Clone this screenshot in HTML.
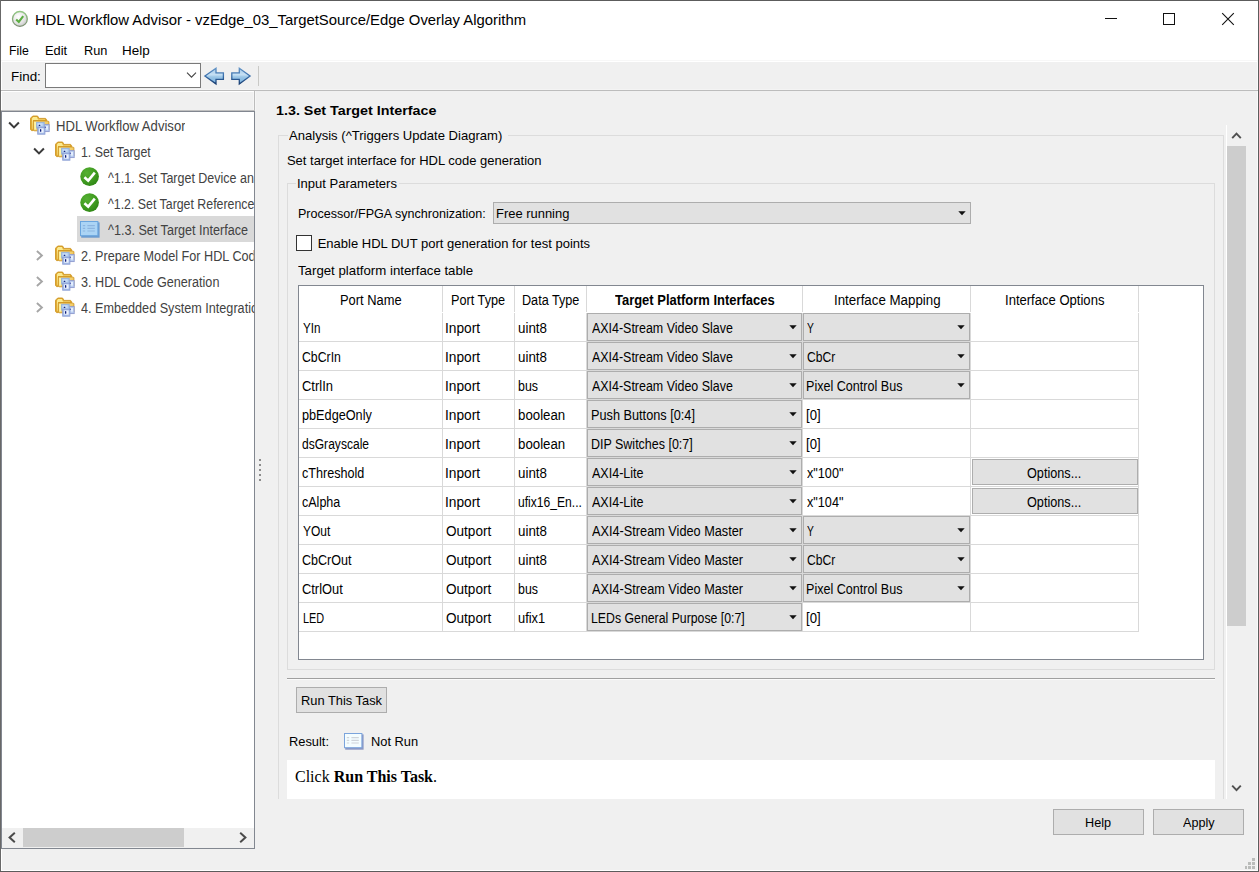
<!DOCTYPE html><html><head><meta charset="utf-8"><title>HDL Workflow Advisor</title><style>
html,body{margin:0;padding:0;}body{width:1259px;height:872px;position:relative;overflow:hidden;background:#f0f0f0;font-family:"Liberation Sans", sans-serif;}
.a{position:absolute;}.t{position:absolute;white-space:nowrap;line-height:normal;transform-origin:0 0;font-family:"Liberation Sans", sans-serif;}
.serif{font-family:"Liberation Serif",serif;}
</style></head><body>
<div class="a" style="left:0px;top:0px;width:1259px;height:872px;background:#f0f0f0;"></div>
<div class="a" style="left:0px;top:0px;width:1259px;height:62px;background:#fff;"></div>
<div class="a" style="left:0px;top:60px;width:1259px;height:1px;background:#f7f7f7;"></div>
<div class="a" style="left:0px;top:89px;width:1259px;height:1px;background:#f4f4f4;"></div>
<div class="a" style="left:2px;top:91px;width:252px;height:1px;background:#fff;"></div>
<svg class="a" style="left:11px;top:10px" width="18" height="18" viewBox="0 0 18 18">
<defs><radialGradient id="tg" cx="0.4" cy="0.35" r="0.75"><stop offset="0" stop-color="#ffffff"/><stop offset="0.6" stop-color="#e4e4e4"/><stop offset="1" stop-color="#bdbdbd"/></radialGradient>
<linearGradient id="tgb" x1="0" y1="0" x2="0" y2="1"><stop offset="0" stop-color="#93c884"/><stop offset="1" stop-color="#7c8f72"/></linearGradient></defs>
<circle cx="8.9" cy="8.9" r="7.4" fill="url(#tg)" stroke="url(#tgb)" stroke-width="1.3"/>
<path d="M5.2 9.6 L7.8 12 L12.2 6.2" fill="none" stroke="#5cae42" stroke-width="2.1" stroke-linecap="butt" stroke-linejoin="miter"/>
</svg>
<div class="a" style="left:1105px;top:18px;width:12px;height:1px;background:#111;"></div>
<div class="a" style="left:1163px;top:13px;width:12px;height:12px;border:1px solid #111;box-sizing:border-box;"></div>
<svg class="a" style="left:1221px;top:12px" width="14" height="14" viewBox="0 0 14 14"><path d="M1.2 1.2 L12.8 12.8 M12.8 1.2 L1.2 12.8" stroke="#111" stroke-width="1.1" fill="none"/></svg>
<div class="a" style="left:45px;top:63px;width:156px;height:25px;background:#fff;border:1px solid #7a7a7a;box-sizing:border-box;"></div>
<svg class="a" style="left:186px;top:71px" width="11" height="8" viewBox="0 0 11 8"><path d="M1 1.7 L5.5 6.2 L10 1.7" stroke="#444" stroke-width="1.1" fill="none"/></svg>
<svg class="a" style="left:203px;top:66px" width="50" height="20" viewBox="0 0 50 20">
<defs><linearGradient id="ag" x1="0" y1="0" x2="0" y2="1"><stop offset="0" stop-color="#a6cae8"/><stop offset="0.42" stop-color="#c6e0f4"/><stop offset="0.55" stop-color="#9bc6e6"/><stop offset="1" stop-color="#77b0de"/></linearGradient>
<linearGradient id="as" x1="0" y1="0" x2="0" y2="1"><stop offset="0" stop-color="#5f92c6"/><stop offset="0.5" stop-color="#3a6eaa"/><stop offset="1" stop-color="#173c70"/></linearGradient></defs>
<path d="M1.9 10 L13 2.2 L13 6.9 L20.4 6.9 L20.4 13.3 L13 13.3 L13 17.9 Z" fill="url(#ag)" stroke="url(#as)" stroke-width="1.3" stroke-linejoin="miter"/>
<path d="M47.1 10 L36.3 2.2 L36.3 6.9 L28.8 6.9 L28.8 13.3 L36.3 13.3 L36.3 17.9 Z" fill="url(#ag)" stroke="url(#as)" stroke-width="1.3" stroke-linejoin="miter"/>
</svg>
<div class="a" style="left:258px;top:66px;width:1px;height:20px;background:#c9c9c6;"></div>
<div class="a" style="left:254px;top:91px;width:1px;height:20px;background:#bcbcbc;"></div>
<div class="a" style="left:253px;top:92px;width:1px;height:18px;background:#f6f6f6;"></div>
<div class="a" style="left:255px;top:91px;width:1px;height:20px;background:#f6f6f6;"></div>
<div class="a" style="left:1px;top:61px;width:1px;height:50px;background:#fff;"></div>
<div class="a" style="left:1px;top:849px;width:1px;height:22px;background:#fff;"></div>
<div class="a" style="left:1257px;top:61px;width:1px;height:810px;background:#fafafa;"></div>
<div class="a" style="left:1px;top:870px;width:1257px;height:1px;background:#fff;"></div>
<div class="a" style="left:1px;top:110px;width:254px;height:1px;background:#c0c0c0;"></div>
<div class="a" style="left:1px;top:111px;width:254px;height:738px;background:#fff;border:1px solid #828790;box-sizing:border-box;"></div>
<div class="a" style="left:77px;top:216px;width:177px;height:26px;background:#d9d9d9;"></div>
<div class="a" style="left:2px;top:828px;width:252px;height:20px;background:#f0f0f0;"></div>
<div class="a" style="left:23px;top:828px;width:161px;height:19px;background:#cdcdcd;"></div>
<svg class="a" style="left:7px;top:831px" width="10" height="13" viewBox="0 0 10 13"><path d="M7.8 1.8 L2.6 6.5 L7.8 11.2" stroke="#4a4a4a" stroke-width="2" fill="none"/></svg>
<svg class="a" style="left:238px;top:831px" width="10" height="13" viewBox="0 0 10 13"><path d="M2.2 1.8 L7.4 6.5 L2.2 11.2" stroke="#4a4a4a" stroke-width="2" fill="none"/></svg>
<svg width="0" height="0" style="position:absolute"><defs>
<linearGradient id="fg" x1="0" y1="0" x2="1" y2="1"><stop offset="0" stop-color="#fbe9a8"/><stop offset="0.5" stop-color="#f3cf6c"/><stop offset="1" stop-color="#dda433"/></linearGradient>
<linearGradient id="bg2" x1="0" y1="0" x2="1" y2="1"><stop offset="0" stop-color="#cfdcf4"/><stop offset="1" stop-color="#8ea6d6"/></linearGradient>
<radialGradient id="gg" cx="0.35" cy="0.3" r="0.8"><stop offset="0" stop-color="#55b032"/><stop offset="0.6" stop-color="#3f9a20"/><stop offset="1" stop-color="#2c8313"/></radialGradient>
<linearGradient id="lg" x1="0" y1="0" x2="0" y2="1"><stop offset="0" stop-color="#c4e0fa"/><stop offset="1" stop-color="#a3cbf1"/></linearGradient>
</defs></svg>
<svg class="a" style="left:7.5px;top:121px" width="13" height="9" viewBox="0 0 13 9"><path d="M1.1 1.5 L6.0 6.4 L10.9 1.5" stroke="#3a3a3a" stroke-width="2" fill="none"/></svg>
<svg class="a" style="left:30px;top:114.7px" width="20" height="21" viewBox="0 0 20 21">
<path d="M0.5 3.2 L2.7 1 L7.6 1 L8.9 3.4 L15.6 3.4 L16.4 4.2 L16.4 6 L3.4 6 L3.4 15.6 L1.5 15.6 L0.5 14.6 Z" fill="#dfa52b" stroke="#cf9726" stroke-width="0.9"/>
<path d="M1.9 3.4 L3.1 2.1 L7 2.1 L8 4.4 L15 4.4 L15 5 L3 5 L2.6 14.4 L1.9 14 Z" fill="#fbea8e"/>
<path d="M3.4 6 L18.2 6 L18.9 6.8 L18.9 15 L18.1 15.8 L4.1 15.8 L3.4 15.1 Z" fill="url(#fg)" stroke="#cf9726" stroke-width="0.9"/>
<rect x="4.3" y="7" width="1.8" height="7.6" fill="#fdf5a4"/>
<rect x="14.2" y="9.6" width="5" height="7" fill="#b9cdf0" stroke="#8f9bd0" stroke-width="0.9"/>
<rect x="15.6" y="11" width="2.4" height="3.6" fill="#e3eefc"/>
<rect x="6.6" y="7.3" width="7.6" height="5.8" fill="#a9c6ec" stroke="#8fb0e0" stroke-width="0.8"/>
<rect x="7.6" y="8.2" width="5" height="3" fill="#c6dbf5"/>
<rect x="7.7" y="12.2" width="7.2" height="7.0" fill="#a5bde8" stroke="#8d9ed4" stroke-width="0.9"/>
<rect x="9.2" y="13.4" width="4.4" height="4.3" fill="#eef4fd"/>
<rect x="8.7" y="9.8" width="1.6" height="1.2" rx="0.5" fill="#14247e"/>
<rect x="10" y="14.1" width="1.3" height="2.7" rx="0.6" fill="#0d1c7c"/>
<rect x="14.8" y="11.6" width="1" height="1.4" fill="#4a50a8"/>
</svg>
<svg class="a" style="left:32.5px;top:147px" width="13" height="9" viewBox="0 0 13 9"><path d="M1.1 1.5 L6.0 6.4 L10.9 1.5" stroke="#3a3a3a" stroke-width="2" fill="none"/></svg>
<svg class="a" style="left:55px;top:140.7px" width="20" height="21" viewBox="0 0 20 21">
<path d="M0.5 3.2 L2.7 1 L7.6 1 L8.9 3.4 L15.6 3.4 L16.4 4.2 L16.4 6 L3.4 6 L3.4 15.6 L1.5 15.6 L0.5 14.6 Z" fill="#dfa52b" stroke="#cf9726" stroke-width="0.9"/>
<path d="M1.9 3.4 L3.1 2.1 L7 2.1 L8 4.4 L15 4.4 L15 5 L3 5 L2.6 14.4 L1.9 14 Z" fill="#fbea8e"/>
<path d="M3.4 6 L18.2 6 L18.9 6.8 L18.9 15 L18.1 15.8 L4.1 15.8 L3.4 15.1 Z" fill="url(#fg)" stroke="#cf9726" stroke-width="0.9"/>
<rect x="4.3" y="7" width="1.8" height="7.6" fill="#fdf5a4"/>
<rect x="14.2" y="9.6" width="5" height="7" fill="#b9cdf0" stroke="#8f9bd0" stroke-width="0.9"/>
<rect x="15.6" y="11" width="2.4" height="3.6" fill="#e3eefc"/>
<rect x="6.6" y="7.3" width="7.6" height="5.8" fill="#a9c6ec" stroke="#8fb0e0" stroke-width="0.8"/>
<rect x="7.6" y="8.2" width="5" height="3" fill="#c6dbf5"/>
<rect x="7.7" y="12.2" width="7.2" height="7.0" fill="#a5bde8" stroke="#8d9ed4" stroke-width="0.9"/>
<rect x="9.2" y="13.4" width="4.4" height="4.3" fill="#eef4fd"/>
<rect x="8.7" y="9.8" width="1.6" height="1.2" rx="0.5" fill="#14247e"/>
<rect x="10" y="14.1" width="1.3" height="2.7" rx="0.6" fill="#0d1c7c"/>
<rect x="14.8" y="11.6" width="1" height="1.4" fill="#4a50a8"/>
</svg>
<svg class="a" style="left:80px;top:166.8px" width="20" height="20" viewBox="0 0 20 20">
<circle cx="9.6" cy="9.6" r="9.3" fill="url(#gg)"/>
<path d="M4.4 10.2 L8.2 13.6 L14.8 5.6" fill="none" stroke="#fff" stroke-width="2.6"/>
</svg>
<svg class="a" style="left:80px;top:192.8px" width="20" height="20" viewBox="0 0 20 20">
<circle cx="9.6" cy="9.6" r="9.3" fill="url(#gg)"/>
<path d="M4.4 10.2 L8.2 13.6 L14.8 5.6" fill="none" stroke="#fff" stroke-width="2.6"/>
</svg>
<svg class="a" style="left:80px;top:221px" width="20" height="17" viewBox="0 0 20 17">
<rect x="1.2" y="1.4" width="18.4" height="15.3" fill="#6c9bcf"/>
<rect x="0.5" y="0.5" width="17.4" height="14.2" fill="#abd4f5" stroke="#6aa5de" stroke-width="1"/>
<path d="M2.8 4.6 H5.2 M7.4 4.6 H14.8 M2.8 7.4 H5.2 M7.4 7.4 H14.8 M2.8 10 H5.2 M7.4 10 H14.8" stroke="#8db5e0" stroke-width="1.1"/>
</svg>
<svg class="a" style="left:34.7px;top:249px" width="9" height="13" viewBox="0 0 9 13"><path d="M1.9 2.0 L6.9 6.5 L1.9 11.0" stroke="#a6a6a6" stroke-width="1.9" fill="none"/></svg>
<svg class="a" style="left:55px;top:244.7px" width="20" height="21" viewBox="0 0 20 21">
<path d="M0.5 3.2 L2.7 1 L7.6 1 L8.9 3.4 L15.6 3.4 L16.4 4.2 L16.4 6 L3.4 6 L3.4 15.6 L1.5 15.6 L0.5 14.6 Z" fill="#dfa52b" stroke="#cf9726" stroke-width="0.9"/>
<path d="M1.9 3.4 L3.1 2.1 L7 2.1 L8 4.4 L15 4.4 L15 5 L3 5 L2.6 14.4 L1.9 14 Z" fill="#fbea8e"/>
<path d="M3.4 6 L18.2 6 L18.9 6.8 L18.9 15 L18.1 15.8 L4.1 15.8 L3.4 15.1 Z" fill="url(#fg)" stroke="#cf9726" stroke-width="0.9"/>
<rect x="4.3" y="7" width="1.8" height="7.6" fill="#fdf5a4"/>
<rect x="14.2" y="9.6" width="5" height="7" fill="#b9cdf0" stroke="#8f9bd0" stroke-width="0.9"/>
<rect x="15.6" y="11" width="2.4" height="3.6" fill="#e3eefc"/>
<rect x="6.6" y="7.3" width="7.6" height="5.8" fill="#a9c6ec" stroke="#8fb0e0" stroke-width="0.8"/>
<rect x="7.6" y="8.2" width="5" height="3" fill="#c6dbf5"/>
<rect x="7.7" y="12.2" width="7.2" height="7.0" fill="#a5bde8" stroke="#8d9ed4" stroke-width="0.9"/>
<rect x="9.2" y="13.4" width="4.4" height="4.3" fill="#eef4fd"/>
<rect x="8.7" y="9.8" width="1.6" height="1.2" rx="0.5" fill="#14247e"/>
<rect x="10" y="14.1" width="1.3" height="2.7" rx="0.6" fill="#0d1c7c"/>
<rect x="14.8" y="11.6" width="1" height="1.4" fill="#4a50a8"/>
</svg>
<svg class="a" style="left:34.7px;top:275px" width="9" height="13" viewBox="0 0 9 13"><path d="M1.9 2.0 L6.9 6.5 L1.9 11.0" stroke="#a6a6a6" stroke-width="1.9" fill="none"/></svg>
<svg class="a" style="left:55px;top:270.7px" width="20" height="21" viewBox="0 0 20 21">
<path d="M0.5 3.2 L2.7 1 L7.6 1 L8.9 3.4 L15.6 3.4 L16.4 4.2 L16.4 6 L3.4 6 L3.4 15.6 L1.5 15.6 L0.5 14.6 Z" fill="#dfa52b" stroke="#cf9726" stroke-width="0.9"/>
<path d="M1.9 3.4 L3.1 2.1 L7 2.1 L8 4.4 L15 4.4 L15 5 L3 5 L2.6 14.4 L1.9 14 Z" fill="#fbea8e"/>
<path d="M3.4 6 L18.2 6 L18.9 6.8 L18.9 15 L18.1 15.8 L4.1 15.8 L3.4 15.1 Z" fill="url(#fg)" stroke="#cf9726" stroke-width="0.9"/>
<rect x="4.3" y="7" width="1.8" height="7.6" fill="#fdf5a4"/>
<rect x="14.2" y="9.6" width="5" height="7" fill="#b9cdf0" stroke="#8f9bd0" stroke-width="0.9"/>
<rect x="15.6" y="11" width="2.4" height="3.6" fill="#e3eefc"/>
<rect x="6.6" y="7.3" width="7.6" height="5.8" fill="#a9c6ec" stroke="#8fb0e0" stroke-width="0.8"/>
<rect x="7.6" y="8.2" width="5" height="3" fill="#c6dbf5"/>
<rect x="7.7" y="12.2" width="7.2" height="7.0" fill="#a5bde8" stroke="#8d9ed4" stroke-width="0.9"/>
<rect x="9.2" y="13.4" width="4.4" height="4.3" fill="#eef4fd"/>
<rect x="8.7" y="9.8" width="1.6" height="1.2" rx="0.5" fill="#14247e"/>
<rect x="10" y="14.1" width="1.3" height="2.7" rx="0.6" fill="#0d1c7c"/>
<rect x="14.8" y="11.6" width="1" height="1.4" fill="#4a50a8"/>
</svg>
<svg class="a" style="left:34.7px;top:301px" width="9" height="13" viewBox="0 0 9 13"><path d="M1.9 2.0 L6.9 6.5 L1.9 11.0" stroke="#a6a6a6" stroke-width="1.9" fill="none"/></svg>
<svg class="a" style="left:55px;top:296.7px" width="20" height="21" viewBox="0 0 20 21">
<path d="M0.5 3.2 L2.7 1 L7.6 1 L8.9 3.4 L15.6 3.4 L16.4 4.2 L16.4 6 L3.4 6 L3.4 15.6 L1.5 15.6 L0.5 14.6 Z" fill="#dfa52b" stroke="#cf9726" stroke-width="0.9"/>
<path d="M1.9 3.4 L3.1 2.1 L7 2.1 L8 4.4 L15 4.4 L15 5 L3 5 L2.6 14.4 L1.9 14 Z" fill="#fbea8e"/>
<path d="M3.4 6 L18.2 6 L18.9 6.8 L18.9 15 L18.1 15.8 L4.1 15.8 L3.4 15.1 Z" fill="url(#fg)" stroke="#cf9726" stroke-width="0.9"/>
<rect x="4.3" y="7" width="1.8" height="7.6" fill="#fdf5a4"/>
<rect x="14.2" y="9.6" width="5" height="7" fill="#b9cdf0" stroke="#8f9bd0" stroke-width="0.9"/>
<rect x="15.6" y="11" width="2.4" height="3.6" fill="#e3eefc"/>
<rect x="6.6" y="7.3" width="7.6" height="5.8" fill="#a9c6ec" stroke="#8fb0e0" stroke-width="0.8"/>
<rect x="7.6" y="8.2" width="5" height="3" fill="#c6dbf5"/>
<rect x="7.7" y="12.2" width="7.2" height="7.0" fill="#a5bde8" stroke="#8d9ed4" stroke-width="0.9"/>
<rect x="9.2" y="13.4" width="4.4" height="4.3" fill="#eef4fd"/>
<rect x="8.7" y="9.8" width="1.6" height="1.2" rx="0.5" fill="#14247e"/>
<rect x="10" y="14.1" width="1.3" height="2.7" rx="0.6" fill="#0d1c7c"/>
<rect x="14.8" y="11.6" width="1" height="1.4" fill="#4a50a8"/>
</svg>
<div class="a" style="left:259px;top:459px;width:2px;height:2px;background:#8c8c8c;"></div>
<div class="a" style="left:259px;top:464px;width:2px;height:2px;background:#8c8c8c;"></div>
<div class="a" style="left:259px;top:469px;width:2px;height:2px;background:#8c8c8c;"></div>
<div class="a" style="left:259px;top:474px;width:2px;height:2px;background:#8c8c8c;"></div>
<div class="a" style="left:259px;top:479px;width:2px;height:2px;background:#8c8c8c;"></div>
<div class="a" style="left:278px;top:135px;width:10px;height:1px;background:#dcdcdc;"></div>
<div class="a" style="left:508px;top:135px;width:716px;height:1px;background:#dcdcdc;"></div>
<div class="a" style="left:278px;top:135px;width:1px;height:664px;background:#dcdcdc;"></div>
<div class="a" style="left:1223px;top:135px;width:1px;height:664px;background:#dcdcdc;"></div>
<div class="a" style="left:287px;top:183px;width:9px;height:1px;background:#dcdcdc;"></div>
<div class="a" style="left:399px;top:183px;width:816px;height:1px;background:#dcdcdc;"></div>
<div class="a" style="left:287px;top:183px;width:1px;height:487px;background:#dcdcdc;"></div>
<div class="a" style="left:1214px;top:183px;width:1px;height:487px;background:#dcdcdc;"></div>
<div class="a" style="left:287px;top:669px;width:928px;height:1px;background:#dcdcdc;"></div>
<div class="a" style="left:493px;top:202px;width:478px;height:22px;background:#e1e1e1;border:1px solid #adadad;box-sizing:border-box;"></div>
<svg class="a" style="left:957.5px;top:211px" width="8" height="5" viewBox="0 0 8 5"><path d="M0.3 0.3 L7.7 0.3 L4 4.3 Z" fill="#111"/></svg>
<div class="a" style="left:296px;top:235px;width:16px;height:16px;background:#fff;border:1px solid #333;box-sizing:border-box;"></div>
<div class="a" style="left:298px;top:285px;width:906px;height:375px;background:#fff;border:1px solid #828790;box-sizing:border-box;"></div>
<div class="a" style="left:442px;top:286px;width:1px;height:346px;background:#d9d9d9;"></div>
<div class="a" style="left:514px;top:286px;width:1px;height:346px;background:#d9d9d9;"></div>
<div class="a" style="left:586px;top:286px;width:1px;height:346px;background:#d9d9d9;"></div>
<div class="a" style="left:802px;top:286px;width:1px;height:346px;background:#d9d9d9;"></div>
<div class="a" style="left:970px;top:286px;width:1px;height:346px;background:#d9d9d9;"></div>
<div class="a" style="left:1138px;top:286px;width:1px;height:346px;background:#d9d9d9;"></div>
<div class="a" style="left:299px;top:312px;width:840px;height:1px;background:#fff;"></div>
<div class="a" style="left:299px;top:341px;width:840px;height:1px;background:#d9d9d9;"></div>
<div class="a" style="left:299px;top:370px;width:840px;height:1px;background:#d9d9d9;"></div>
<div class="a" style="left:299px;top:399px;width:840px;height:1px;background:#d9d9d9;"></div>
<div class="a" style="left:299px;top:428px;width:840px;height:1px;background:#d9d9d9;"></div>
<div class="a" style="left:299px;top:457px;width:840px;height:1px;background:#d9d9d9;"></div>
<div class="a" style="left:299px;top:486px;width:840px;height:1px;background:#d9d9d9;"></div>
<div class="a" style="left:299px;top:515px;width:840px;height:1px;background:#d9d9d9;"></div>
<div class="a" style="left:299px;top:544px;width:840px;height:1px;background:#d9d9d9;"></div>
<div class="a" style="left:299px;top:573px;width:840px;height:1px;background:#d9d9d9;"></div>
<div class="a" style="left:299px;top:602px;width:840px;height:1px;background:#d9d9d9;"></div>
<div class="a" style="left:299px;top:631px;width:840px;height:1px;background:#d9d9d9;"></div>
<div class="a" style="left:587px;top:313px;width:215px;height:28px;background:#e1e1e1;border:1px solid #adadad;box-sizing:border-box;"></div>
<svg class="a" style="left:788.5px;top:325px" width="8" height="5" viewBox="0 0 8 5"><path d="M0.3 0.3 L7.7 0.3 L4 4.3 Z" fill="#111"/></svg>
<div class="a" style="left:803px;top:313px;width:167px;height:28px;background:#e1e1e1;border:1px solid #adadad;box-sizing:border-box;"></div>
<svg class="a" style="left:956.5px;top:325px" width="8" height="5" viewBox="0 0 8 5"><path d="M0.3 0.3 L7.7 0.3 L4 4.3 Z" fill="#111"/></svg>
<div class="a" style="left:587px;top:342px;width:215px;height:28px;background:#e1e1e1;border:1px solid #adadad;box-sizing:border-box;"></div>
<svg class="a" style="left:788.5px;top:354px" width="8" height="5" viewBox="0 0 8 5"><path d="M0.3 0.3 L7.7 0.3 L4 4.3 Z" fill="#111"/></svg>
<div class="a" style="left:803px;top:342px;width:167px;height:28px;background:#e1e1e1;border:1px solid #adadad;box-sizing:border-box;"></div>
<svg class="a" style="left:956.5px;top:354px" width="8" height="5" viewBox="0 0 8 5"><path d="M0.3 0.3 L7.7 0.3 L4 4.3 Z" fill="#111"/></svg>
<div class="a" style="left:587px;top:371px;width:215px;height:28px;background:#e1e1e1;border:1px solid #adadad;box-sizing:border-box;"></div>
<svg class="a" style="left:788.5px;top:383px" width="8" height="5" viewBox="0 0 8 5"><path d="M0.3 0.3 L7.7 0.3 L4 4.3 Z" fill="#111"/></svg>
<div class="a" style="left:803px;top:371px;width:167px;height:28px;background:#e1e1e1;border:1px solid #adadad;box-sizing:border-box;"></div>
<svg class="a" style="left:956.5px;top:383px" width="8" height="5" viewBox="0 0 8 5"><path d="M0.3 0.3 L7.7 0.3 L4 4.3 Z" fill="#111"/></svg>
<div class="a" style="left:587px;top:400px;width:215px;height:28px;background:#e1e1e1;border:1px solid #adadad;box-sizing:border-box;"></div>
<svg class="a" style="left:788.5px;top:412px" width="8" height="5" viewBox="0 0 8 5"><path d="M0.3 0.3 L7.7 0.3 L4 4.3 Z" fill="#111"/></svg>
<div class="a" style="left:587px;top:429px;width:215px;height:28px;background:#e1e1e1;border:1px solid #adadad;box-sizing:border-box;"></div>
<svg class="a" style="left:788.5px;top:441px" width="8" height="5" viewBox="0 0 8 5"><path d="M0.3 0.3 L7.7 0.3 L4 4.3 Z" fill="#111"/></svg>
<div class="a" style="left:587px;top:458px;width:215px;height:28px;background:#e1e1e1;border:1px solid #adadad;box-sizing:border-box;"></div>
<svg class="a" style="left:788.5px;top:470px" width="8" height="5" viewBox="0 0 8 5"><path d="M0.3 0.3 L7.7 0.3 L4 4.3 Z" fill="#111"/></svg>
<div class="a" style="left:587px;top:487px;width:215px;height:28px;background:#e1e1e1;border:1px solid #adadad;box-sizing:border-box;"></div>
<svg class="a" style="left:788.5px;top:499px" width="8" height="5" viewBox="0 0 8 5"><path d="M0.3 0.3 L7.7 0.3 L4 4.3 Z" fill="#111"/></svg>
<div class="a" style="left:587px;top:516px;width:215px;height:28px;background:#e1e1e1;border:1px solid #adadad;box-sizing:border-box;"></div>
<svg class="a" style="left:788.5px;top:528px" width="8" height="5" viewBox="0 0 8 5"><path d="M0.3 0.3 L7.7 0.3 L4 4.3 Z" fill="#111"/></svg>
<div class="a" style="left:803px;top:516px;width:167px;height:28px;background:#e1e1e1;border:1px solid #adadad;box-sizing:border-box;"></div>
<svg class="a" style="left:956.5px;top:528px" width="8" height="5" viewBox="0 0 8 5"><path d="M0.3 0.3 L7.7 0.3 L4 4.3 Z" fill="#111"/></svg>
<div class="a" style="left:587px;top:545px;width:215px;height:28px;background:#e1e1e1;border:1px solid #adadad;box-sizing:border-box;"></div>
<svg class="a" style="left:788.5px;top:557px" width="8" height="5" viewBox="0 0 8 5"><path d="M0.3 0.3 L7.7 0.3 L4 4.3 Z" fill="#111"/></svg>
<div class="a" style="left:803px;top:545px;width:167px;height:28px;background:#e1e1e1;border:1px solid #adadad;box-sizing:border-box;"></div>
<svg class="a" style="left:956.5px;top:557px" width="8" height="5" viewBox="0 0 8 5"><path d="M0.3 0.3 L7.7 0.3 L4 4.3 Z" fill="#111"/></svg>
<div class="a" style="left:587px;top:574px;width:215px;height:28px;background:#e1e1e1;border:1px solid #adadad;box-sizing:border-box;"></div>
<svg class="a" style="left:788.5px;top:586px" width="8" height="5" viewBox="0 0 8 5"><path d="M0.3 0.3 L7.7 0.3 L4 4.3 Z" fill="#111"/></svg>
<div class="a" style="left:803px;top:574px;width:167px;height:28px;background:#e1e1e1;border:1px solid #adadad;box-sizing:border-box;"></div>
<svg class="a" style="left:956.5px;top:586px" width="8" height="5" viewBox="0 0 8 5"><path d="M0.3 0.3 L7.7 0.3 L4 4.3 Z" fill="#111"/></svg>
<div class="a" style="left:587px;top:603px;width:215px;height:28px;background:#e1e1e1;border:1px solid #adadad;box-sizing:border-box;"></div>
<svg class="a" style="left:788.5px;top:615px" width="8" height="5" viewBox="0 0 8 5"><path d="M0.3 0.3 L7.7 0.3 L4 4.3 Z" fill="#111"/></svg>
<div class="a" style="left:972px;top:459px;width:166px;height:26px;background:#e1e1e1;border:1px solid #adadad;box-sizing:border-box;"></div>
<div class="a" style="left:972px;top:488px;width:166px;height:26px;background:#e1e1e1;border:1px solid #adadad;box-sizing:border-box;"></div>
<div class="a" style="left:287px;top:678px;width:928px;height:1px;background:#a0a0a0;"></div>
<div class="a" style="left:287px;top:679px;width:928px;height:1px;background:#fbfbfb;"></div>
<div class="a" style="left:296px;top:687px;width:91px;height:26px;background:#e1e1e1;border:1px solid #adadad;box-sizing:border-box;"></div>
<svg class="a" style="left:344px;top:733px" width="20" height="17" viewBox="0 0 20 17">
<rect x="1.2" y="1.4" width="18.4" height="15.3" fill="#8c98c4"/>
<rect x="0.5" y="0.5" width="17.4" height="14.2" fill="#f4fdff" stroke="#7ba4dc" stroke-width="1"/>
<path d="M2.8 4.6 H5.2 M7.4 4.6 H14.8 M2.8 7.4 H5.2 M7.4 7.4 H14.8 M2.8 10 H5.2 M7.4 10 H14.8" stroke="#cfd4da" stroke-width="1.1"/>
</svg>
<div class="a" style="left:287px;top:760px;width:928px;height:39px;background:#fff;"></div>
<div class="a serif" style="left:295px;top:767.74px;font-size:16px;white-space:nowrap;color:#000" id="click">Click <b>Run This Task</b>.</div>
<div class="a" style="left:1226px;top:125px;width:1px;height:674px;background:#fff;"></div>
<div class="a" style="left:1227px;top:125px;width:20px;height:674px;background:#f0f0f0;"></div>
<div class="a" style="left:1227px;top:146px;width:19px;height:480px;background:#cdcdcd;"></div>
<svg class="a" style="left:1231px;top:131px" width="11" height="9" viewBox="0 0 11 9"><path d="M1.2 7.2 L5.5 2.6 L9.8 7.2" stroke="#505050" stroke-width="1.9" fill="none"/></svg>
<svg class="a" style="left:1231px;top:784px" width="11" height="9" viewBox="0 0 11 9"><path d="M1.2 1.6 L5.5 6.2 L9.8 1.6" stroke="#505050" stroke-width="1.9" fill="none"/></svg>
<div class="a" style="left:1053px;top:809px;width:91px;height:26px;background:#e1e1e1;border:1px solid #adadad;box-sizing:border-box;"></div>
<div class="a" style="left:1153px;top:809px;width:91px;height:26px;background:#e1e1e1;border:1px solid #adadad;box-sizing:border-box;"></div>
<div class="a" style="left:1252px;top:858px;width:3px;height:3px;background:#babcba;"></div>
<div class="a" style="left:1248px;top:862px;width:3px;height:3px;background:#babcba;"></div>
<div class="a" style="left:1252px;top:862px;width:3px;height:3px;background:#babcba;"></div>
<div class="a" style="left:1245px;top:866px;width:2px;height:3px;background:#babcba;"></div>
<div class="a" style="left:1248px;top:866px;width:3px;height:3px;background:#babcba;"></div>
<div class="a" style="left:1252px;top:866px;width:3px;height:3px;background:#babcba;"></div>
<div class="a" style="left:1px;top:90px;width:1257px;height:1px;background:#bcbcbc;"></div>
<div class="a" style="left:0px;top:0px;width:1259px;height:1px;background:#5c5c5c;"></div>
<div class="a" style="left:0px;top:0px;width:1px;height:872px;background:#686868;"></div>
<div class="a" style="left:1258px;top:0px;width:1px;height:872px;background:#5c5c5c;"></div>
<div class="a" style="left:0px;top:871px;width:1259px;height:1px;background:#5c5c5c;"></div>
<span class="t" id="t0" style="left:35.28px;top:11.42px;font-size:15px;color:#000;transform:scaleX(0.9898);">HDL Workflow Advisor - vzEdge_03_TargetSource/Edge Overlay Algorithm</span>
<span class="t" id="t1" style="left:8.99px;top:42.78px;font-size:13.5px;color:#000;transform:scaleX(0.9098);">File</span>
<span class="t" id="t2" style="left:45.20px;top:42.78px;font-size:13.5px;color:#000;transform:scaleX(0.9520);">Edit</span>
<span class="t" id="t3" style="left:83.95px;top:42.78px;font-size:13.5px;color:#000;transform:scaleX(0.9437);">Run</span>
<span class="t" id="t4" style="left:122.40px;top:42.78px;font-size:13.5px;color:#000;transform:scaleX(0.9965);">Help</span>
<span class="t" id="t5" style="left:11.40px;top:68.78px;font-size:13.5px;color:#000;transform:scaleX(0.9937);">Find:</span>
<span class="t" id="t6" style="left:55.68px;top:117.83px;font-size:14px;color:#424242;transform:scaleX(0.9354);max-width:212.02px;overflow:hidden;">HDL Workflow Advisor</span>
<span class="t" id="t7" style="left:81.31px;top:143.83px;font-size:14px;color:#424242;transform:scaleX(0.8817);max-width:195.85px;overflow:hidden;">1. Set Target</span>
<span class="t" id="t8" style="left:107.94px;top:169.83px;font-size:14px;color:#424242;transform:scaleX(0.8921);max-width:163.73px;overflow:hidden;">^1.1. Set Target Device an</span>
<span class="t" id="t9" style="left:107.94px;top:195.83px;font-size:14px;color:#424242;transform:scaleX(0.8824);max-width:165.52px;overflow:hidden;">^1.2. Set Target Reference</span>
<span class="t" id="t10" style="left:107.94px;top:221.83px;font-size:14px;color:#424242;transform:scaleX(0.8997);max-width:162.35px;overflow:hidden;">^1.3. Set Target Interface</span>
<span class="t" id="t11" style="left:81.16px;top:247.83px;font-size:14px;color:#424242;transform:scaleX(0.9036);max-width:191.28px;overflow:hidden;">2. Prepare Model For HDL Code</span>
<span class="t" id="t12" style="left:81.32px;top:273.83px;font-size:14px;color:#424242;transform:scaleX(0.9012);max-width:191.62px;overflow:hidden;">3. HDL Code Generation</span>
<span class="t" id="t13" style="left:80.81px;top:299.83px;font-size:14px;color:#424242;transform:scaleX(0.9024);max-width:191.93px;overflow:hidden;">4. Embedded System Integration</span>
<span class="t" id="t14" style="left:276.35px;top:103.23px;font-size:13px;color:#000;font-weight:bold;transform:scaleX(1.1007);">1.3. Set Target Interface</span>
<span class="t" id="t15" style="left:288.72px;top:128.24px;font-size:13px;color:#000;transform:scaleX(1.0051);">Analysis (^Triggers Update Diagram)</span>
<span class="t" id="t16" style="left:286.91px;top:153.24px;font-size:13px;color:#000;">Set target interface for HDL code generation</span>
<span class="t" id="t17" style="left:296.80px;top:176.24px;font-size:13px;color:#000;transform:scaleX(1.0020);">Input Parameters</span>
<span class="t" id="t18" style="left:297.72px;top:206.24px;font-size:13px;color:#000;transform:scaleX(0.9656);">Processor/FPGA synchronization:</span>
<span class="t" id="t19" style="left:496.44px;top:206.24px;font-size:13px;color:#000;transform:scaleX(0.9956);">Free running</span>
<span class="t" id="t20" style="left:317.69px;top:236.24px;font-size:13px;color:#000;">Enable HDL DUT port generation for test points</span>
<span class="t" id="t21" style="left:298.45px;top:263.24px;font-size:13px;color:#000;transform:scaleX(1.0183);">Target platform interface table</span>
<span class="t" id="t22" style="left:340.19px;top:292.33px;font-size:14px;color:#000;transform:scaleX(0.9209);">Port Name</span>
<span class="t" id="t23" style="left:451.46px;top:292.33px;font-size:14px;color:#000;transform:scaleX(0.9067);">Port Type</span>
<span class="t" id="t24" style="left:521.96px;top:292.33px;font-size:14px;color:#000;transform:scaleX(0.9022);">Data Type</span>
<span class="t" id="t25" style="left:615.35px;top:292.33px;font-size:14px;color:#000;font-weight:bold;transform:scaleX(0.9258);">Target Platform Interfaces</span>
<span class="t" id="t26" style="left:833.52px;top:292.33px;font-size:14px;color:#000;transform:scaleX(0.9510);">Interface Mapping</span>
<span class="t" id="t27" style="left:1005.05px;top:292.33px;font-size:14px;color:#000;transform:scaleX(0.9325);">Interface Options</span>
<span class="t" id="t28" style="left:302.74px;top:320.33px;font-size:14px;color:#000;transform:scaleX(0.8334);">YIn</span>
<span class="t" id="t29" style="left:445.48px;top:320.33px;font-size:14px;color:#000;transform:scaleX(0.9806);">Inport</span>
<span class="t" id="t30" style="left:517.88px;top:320.33px;font-size:14px;color:#000;transform:scaleX(0.9535);">uint8</span>
<span class="t" id="t31" style="left:591.73px;top:320.33px;font-size:14px;color:#000;transform:scaleX(0.8885);">AXI4-Stream Video Slave</span>
<span class="t" id="t32" style="left:807.27px;top:320.33px;font-size:14px;color:#000;transform:scaleX(0.7332);">Y</span>
<span class="t" id="t33" style="left:302.38px;top:349.33px;font-size:14px;color:#000;transform:scaleX(0.8774);">CbCrIn</span>
<span class="t" id="t34" style="left:445.48px;top:349.33px;font-size:14px;color:#000;transform:scaleX(0.9806);">Inport</span>
<span class="t" id="t35" style="left:517.88px;top:349.33px;font-size:14px;color:#000;transform:scaleX(0.9535);">uint8</span>
<span class="t" id="t36" style="left:591.73px;top:349.33px;font-size:14px;color:#000;transform:scaleX(0.8885);">AXI4-Stream Video Slave</span>
<span class="t" id="t37" style="left:806.89px;top:349.33px;font-size:14px;color:#000;transform:scaleX(0.8636);">CbCr</span>
<span class="t" id="t38" style="left:302.34px;top:378.33px;font-size:14px;color:#000;transform:scaleX(0.9267);">CtrlIn</span>
<span class="t" id="t39" style="left:445.48px;top:378.33px;font-size:14px;color:#000;transform:scaleX(0.9806);">Inport</span>
<span class="t" id="t40" style="left:517.95px;top:378.33px;font-size:14px;color:#000;transform:scaleX(0.8857);">bus</span>
<span class="t" id="t41" style="left:591.73px;top:378.33px;font-size:14px;color:#000;transform:scaleX(0.8885);">AXI4-Stream Video Slave</span>
<span class="t" id="t42" style="left:806.47px;top:378.33px;font-size:14px;color:#000;transform:scaleX(0.8985);">Pixel Control Bus</span>
<span class="t" id="t43" style="left:302.18px;top:407.33px;font-size:14px;color:#000;transform:scaleX(0.9063);">pbEdgeOnly</span>
<span class="t" id="t44" style="left:445.48px;top:407.33px;font-size:14px;color:#000;transform:scaleX(0.9806);">Inport</span>
<span class="t" id="t45" style="left:517.89px;top:407.33px;font-size:14px;color:#000;transform:scaleX(0.9476);">boolean</span>
<span class="t" id="t46" style="left:590.71px;top:407.33px;font-size:14px;color:#000;transform:scaleX(0.9086);">Push Buttons [0:4]</span>
<span class="t" id="t47" style="left:806.06px;top:407.33px;font-size:14px;color:#000;transform:scaleX(0.9387);">[0]</span>
<span class="t" id="t48" style="left:302.49px;top:436.33px;font-size:14px;color:#000;transform:scaleX(0.8616);">dsGrayscale</span>
<span class="t" id="t49" style="left:445.48px;top:436.33px;font-size:14px;color:#000;transform:scaleX(0.9806);">Inport</span>
<span class="t" id="t50" style="left:517.89px;top:436.33px;font-size:14px;color:#000;transform:scaleX(0.9476);">boolean</span>
<span class="t" id="t51" style="left:590.73px;top:436.33px;font-size:14px;color:#000;transform:scaleX(0.8911);">DIP Switches [0:7]</span>
<span class="t" id="t52" style="left:806.06px;top:436.33px;font-size:14px;color:#000;transform:scaleX(0.9387);">[0]</span>
<span class="t" id="t53" style="left:302.46px;top:465.33px;font-size:14px;color:#000;transform:scaleX(0.9001);">cThreshold</span>
<span class="t" id="t54" style="left:445.48px;top:465.33px;font-size:14px;color:#000;transform:scaleX(0.9806);">Inport</span>
<span class="t" id="t55" style="left:517.88px;top:465.33px;font-size:14px;color:#000;transform:scaleX(0.9535);">uint8</span>
<span class="t" id="t56" style="left:591.73px;top:465.33px;font-size:14px;color:#000;transform:scaleX(0.8956);">AXI4-Lite</span>
<span class="t" id="t57" style="left:806.86px;top:465.33px;font-size:14px;color:#000;transform:scaleX(0.9037);">x"100"</span>
<span class="t" id="t58" style="left:302.47px;top:494.33px;font-size:14px;color:#000;transform:scaleX(0.8942);">cAlpha</span>
<span class="t" id="t59" style="left:445.48px;top:494.33px;font-size:14px;color:#000;transform:scaleX(0.9806);">Inport</span>
<span class="t" id="t60" style="left:517.96px;top:494.33px;font-size:14px;color:#000;transform:scaleX(0.8641);">ufix16_En...</span>
<span class="t" id="t61" style="left:591.73px;top:494.33px;font-size:14px;color:#000;transform:scaleX(0.8956);">AXI4-Lite</span>
<span class="t" id="t62" style="left:806.86px;top:494.33px;font-size:14px;color:#000;transform:scaleX(0.9037);">x"104"</span>
<span class="t" id="t63" style="left:302.74px;top:523.33px;font-size:14px;color:#000;transform:scaleX(0.8572);">YOut</span>
<span class="t" id="t64" style="left:446.11px;top:523.33px;font-size:14px;color:#000;transform:scaleX(0.9687);">Outport</span>
<span class="t" id="t65" style="left:517.88px;top:523.33px;font-size:14px;color:#000;transform:scaleX(0.9535);">uint8</span>
<span class="t" id="t66" style="left:591.73px;top:523.33px;font-size:14px;color:#000;transform:scaleX(0.9084);">AXI4-Stream Video Master</span>
<span class="t" id="t67" style="left:807.27px;top:523.33px;font-size:14px;color:#000;transform:scaleX(0.7332);">Y</span>
<span class="t" id="t68" style="left:302.36px;top:552.33px;font-size:14px;color:#000;transform:scaleX(0.8958);">CbCrOut</span>
<span class="t" id="t69" style="left:446.11px;top:552.33px;font-size:14px;color:#000;transform:scaleX(0.9687);">Outport</span>
<span class="t" id="t70" style="left:517.88px;top:552.33px;font-size:14px;color:#000;transform:scaleX(0.9535);">uint8</span>
<span class="t" id="t71" style="left:591.73px;top:552.33px;font-size:14px;color:#000;transform:scaleX(0.9084);">AXI4-Stream Video Master</span>
<span class="t" id="t72" style="left:806.89px;top:552.33px;font-size:14px;color:#000;transform:scaleX(0.8636);">CbCr</span>
<span class="t" id="t73" style="left:302.35px;top:581.33px;font-size:14px;color:#000;transform:scaleX(0.9189);">CtrlOut</span>
<span class="t" id="t74" style="left:446.11px;top:581.33px;font-size:14px;color:#000;transform:scaleX(0.9687);">Outport</span>
<span class="t" id="t75" style="left:517.95px;top:581.33px;font-size:14px;color:#000;transform:scaleX(0.8857);">bus</span>
<span class="t" id="t76" style="left:591.73px;top:581.33px;font-size:14px;color:#000;transform:scaleX(0.9084);">AXI4-Stream Video Master</span>
<span class="t" id="t77" style="left:806.47px;top:581.33px;font-size:14px;color:#000;transform:scaleX(0.8985);">Pixel Control Bus</span>
<span class="t" id="t78" style="left:302.61px;top:610.33px;font-size:14px;color:#000;transform:scaleX(0.7771);">LED</span>
<span class="t" id="t79" style="left:446.11px;top:610.33px;font-size:14px;color:#000;transform:scaleX(0.9687);">Outport</span>
<span class="t" id="t80" style="left:517.91px;top:610.33px;font-size:14px;color:#000;transform:scaleX(0.9201);">ufix1</span>
<span class="t" id="t81" style="left:590.74px;top:610.33px;font-size:14px;color:#000;transform:scaleX(0.8782);">LEDs General Purpose [0:7]</span>
<span class="t" id="t82" style="left:806.06px;top:610.33px;font-size:14px;color:#000;transform:scaleX(0.9387);">[0]</span>
<span class="t" id="t83" style="left:1027.40px;top:465.33px;font-size:14px;color:#000;transform:scaleX(0.9055);">Options...</span>
<span class="t" id="t84" style="left:1027.40px;top:494.33px;font-size:14px;color:#000;transform:scaleX(0.9055);">Options...</span>
<span class="t" id="t85" style="left:300.69px;top:693.24px;font-size:13px;color:#000;transform:scaleX(0.9894);">Run This Task</span>
<span class="t" id="t86" style="left:288.70px;top:733.99px;font-size:13px;color:#000;transform:scaleX(0.9878);">Result:</span>
<span class="t" id="t87" style="left:370.70px;top:733.99px;font-size:13px;color:#000;transform:scaleX(0.9882);">Not Run</span>
<span class="t" id="t88" style="left:1085.21px;top:815.24px;font-size:13px;color:#000;transform:scaleX(0.9746);">Help</span>
<span class="t" id="t89" style="left:1182.73px;top:815.24px;font-size:13px;color:#000;transform:scaleX(0.9698);">Apply</span>
</body></html>
